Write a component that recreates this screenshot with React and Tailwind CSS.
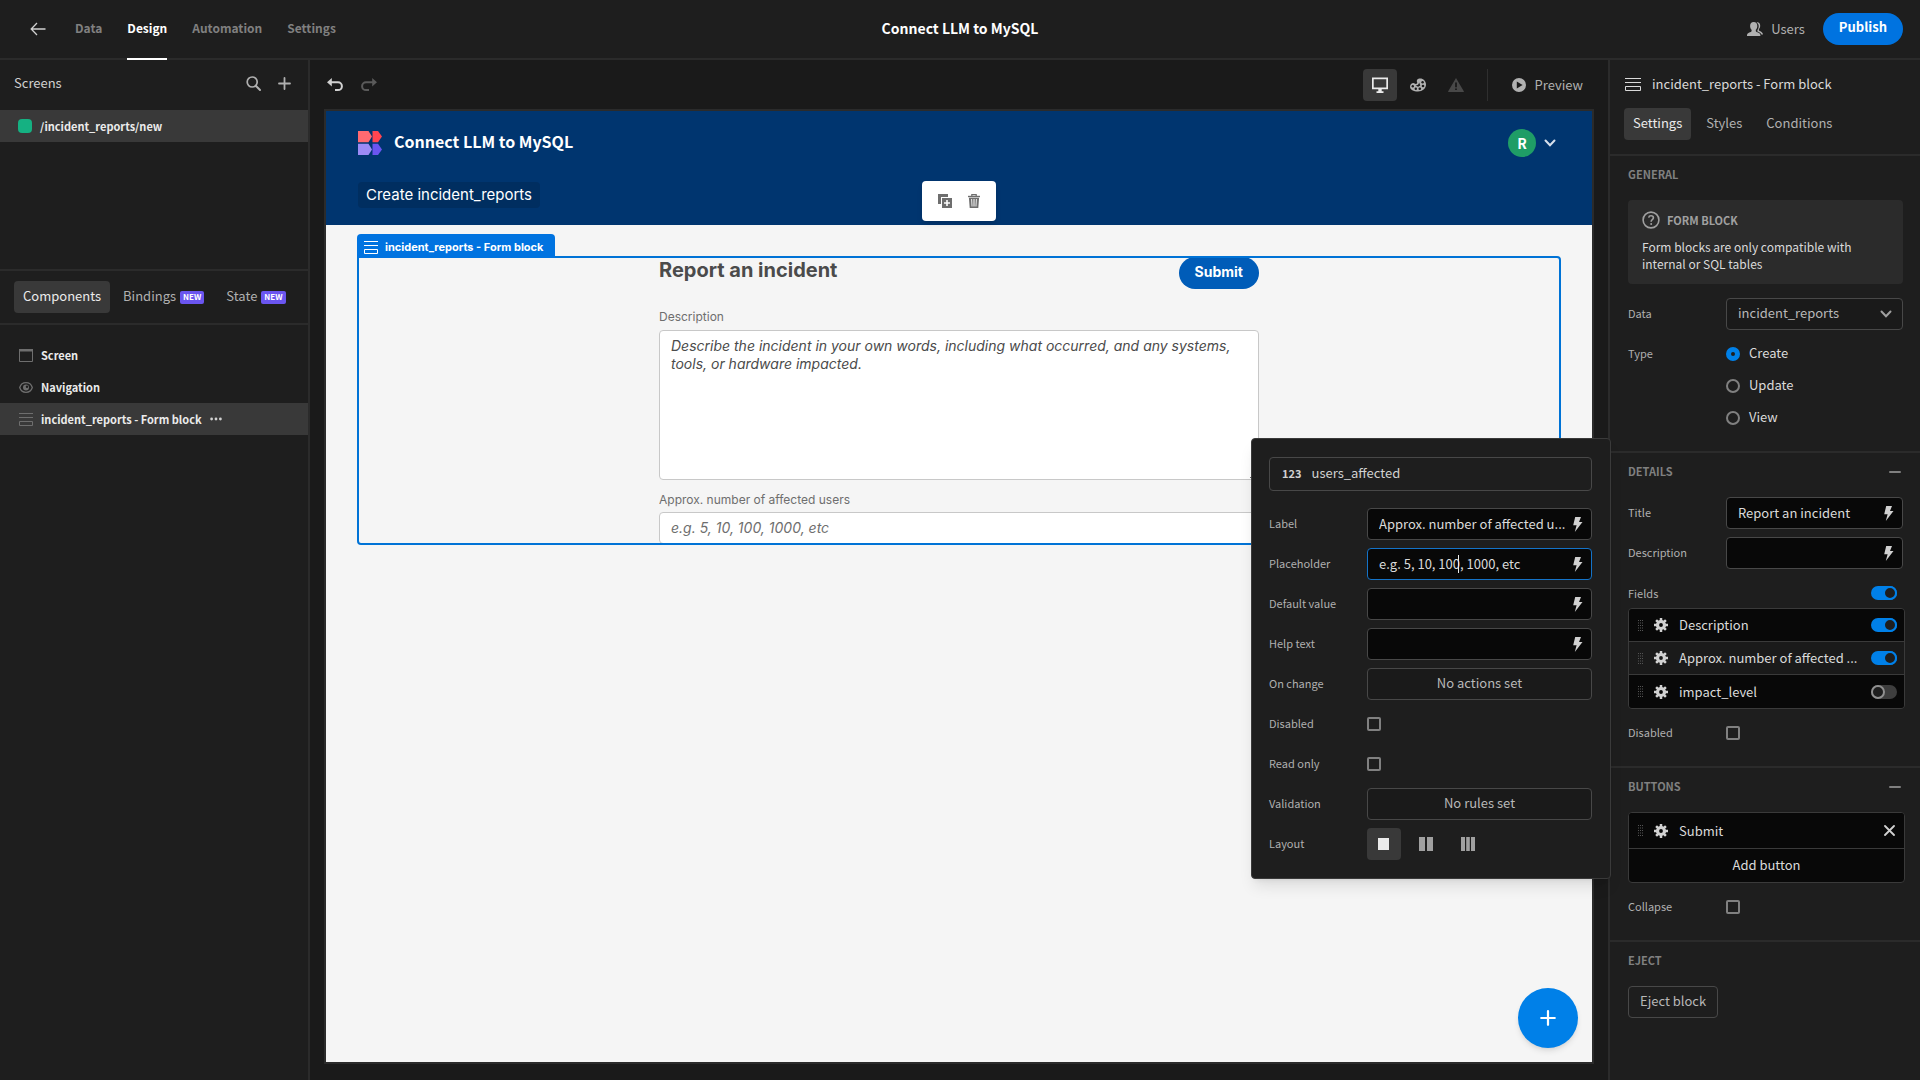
import { useState } from "react";

/* ---------- icons ---------- */

function BackIcon() {
  return (
    <svg width="16" height="14" viewBox="0 0 16 14" fill="none" stroke="currentColor" strokeWidth="1.3" aria-hidden="true">
      <path d="M15.500 7H1.500M7 1L1.200 7L7 13" />
    </svg>
  );
}

function SearchIcon() {
  return (
    <svg width="15" height="15" viewBox="0 0 15 15" fill="none" stroke="currentColor" aria-hidden="true">
      <circle cx="6.2" cy="6" r="5" strokeWidth="1.7" />
      <path d="M9.8 9.8L14 14" strokeWidth="2" strokeLinecap="round" />
    </svg>
  );
}

function PlusIcon({ size = 13 }) {
  return (
    <svg width={size} height={size} viewBox="0 0 13 13" fill="none" stroke="currentColor" strokeWidth="1.8" strokeLinecap="round" aria-hidden="true">
      <path d="M6.5 1V12M1 6.5H12" />
    </svg>
  );
}

function UndoIcon() {
  return (
    <svg width="16" height="14" viewBox="0 0 16 14" aria-hidden="true">
      <path d="M3.5 4.3H11a3.9 3.9 0 0 1 0 7.8H8" fill="none" stroke="currentColor" strokeWidth="2" />
      <path d="M0 4.3L4.8 0V8.6Z" fill="currentColor" />
    </svg>
  );
}

function RedoIcon() {
  return (
    <svg width="16" height="14" viewBox="0 0 16 14" aria-hidden="true">
      <path d="M12.5 4.3H5a3.9 3.9 0 0 0 0 7.8H8" fill="none" stroke="currentColor" strokeWidth="2" />
      <path d="M16 4.3L11.2 0V8.6Z" fill="currentColor" />
    </svg>
  );
}

function UsersIcon() {
  return (
    <svg width="16" height="14" viewBox="0 0 16 14" fill="currentColor" aria-hidden="true">
      <path d="M6.7 0C9 0 10.3 1.7 10.3 3.9c0 1.7-.7 3-1.5 3.9v1.3c0 .5.3.7.8.9 2.2.7 3.8 1.5 3.8 3.200V14H0v-.8C0 11.5 1.600 10.700 3.800 10c.5-.2.8-.4.8-.9V7.800C3.800 6.900 3.100 5.600 3.100 3.900 3.100 1.700 4.400 0 6.700 0Z" />
      <path d="M9.600.4c2.300-.3 3.600 1.100 3.600 3.300 0 1.500-.6 2.600-1.300 3.400v.9c0 .5.3.7.7.9 1.900.7 3.400 1.800 3.400 3.700h-1.600c-.5-1.600-2-2.500-4-3.200V8.200c.7-1 1.300-2.400 1.300-4.200 0-1.600-.8-2.900-2.100-3.600Z" />
    </svg>
  );
}

function DesktopIcon() {
  return (
    <svg width="16" height="16" viewBox="0 0 16 16" fill="currentColor" aria-hidden="true">
      <path fillRule="evenodd" d="M0 .5h16v11.800H9.700v1.900h1.800V16h-7v-1.800h1.800v-1.900H0ZM1.700 2.200v8.400h12.600V2.200Z" />
    </svg>
  );
}

function PaletteIcon() {
  return (
    <svg width="16" height="14" viewBox="0 0 16 14" aria-hidden="true">
      <path
        fill="currentColor"
        d="M9.200.6C12.800 0 16 2.800 16 6.600c0 4-3.600 6.900-8 6.900-4.500 0-8-1.900-8-4.800 0-2.100 1.700-3.600 3.400-3.600 1.100 0 1.400.9 2.400.9 1.300 0 1.700-.9 1.200-1.900C6.300 2.700 7.300.9 9.200.6Z"
      />
      <g fill="#1a1a1a">
        <circle cx="2.800" cy="8.300" r="1.200" />
        <circle cx="5.800" cy="10.800" r="1.200" />
        <circle cx="9.800" cy="10.800" r="1.300" />
        <circle cx="13" cy="8" r="1.300" />
        <circle cx="12.600" cy="4.200" r="1.200" />
        <path d="M5.600 7.400c2 0 3.300-1.100 3.500-3l1.200 3.200-2.200 1.200Z" />
      </g>
    </svg>
  );
}

function AlertIcon() {
  return (
    <svg width="16" height="14" viewBox="0 0 16 14" aria-hidden="true">
      <path d="M8 0L15.800 13.200a.5.5 0 0 1-.4.800H.6a.5.5 0 0 1-.4-.8Z" fill="currentColor" />
      <path d="M7.100 4.500h1.800v4.800H7.100ZM7.100 10.400h1.800v1.700H7.100Z" fill="#1a1a1a" />
    </svg>
  );
}

function PlayIcon() {
  return (
    <svg width="14" height="14" viewBox="0 0 14 14" fill="currentColor" aria-hidden="true">
      <path fillRule="evenodd" d="M7 0a7 7 0 1 1 0 14A7 7 0 0 1 7 0ZM4.800 3.600v6.800L10.600 7Z" />
    </svg>
  );
}

function FormBlockIcon({ width = 14 }) {
  return (
    <svg width={width} height="13" viewBox={width === 16 ? "0 0 16 13" : "0 0 14 13"} fill="none" stroke="currentColor" aria-hidden="true">
      {width === 16 ? <path d="M0 .5H16M0 4.500H16M.5 8.500H15.500V12.500H.5Z" /> : <path d="M0 .5H14M0 4.500H14M.5 8.500H13.500V12.500H.5Z" />}
    </svg>
  );
}

function ScreenIcon() {
  return (
    <svg width="14" height="13" viewBox="0 0 14 13" aria-hidden="true">
      <path d="M.5 1H13.500V12.500H.5Z" fill="none" stroke="currentColor" />
      <path d="M0 0H14V2.500H0Z" fill="currentColor" />
    </svg>
  );
}

function EyeIcon() {
  return (
    <svg width="14" height="11" viewBox="0 0 14 11" aria-hidden="true">
      <path d="M7 .7C10.200.7 12.500 3 13.300 5.500 12.500 8 10.200 10.300 7 10.300S1.500 8 .7 5.500C1.500 3 3.800.7 7 .7Z" fill="none" stroke="currentColor" strokeWidth="1.300" />
      <circle cx="7" cy="5.500" r="3" fill="currentColor" />
      <circle cx="8" cy="4.700" r="1.200" fill="#1e1e1e" />
    </svg>
  );
}

function MoreIcon() {
  return (
    <svg width="12" height="4" viewBox="0 0 12 4" fill="currentColor" aria-hidden="true">
      <circle cx="1.600" cy="2" r="1.400" />
      <circle cx="6" cy="2" r="1.400" />
      <circle cx="10.400" cy="2" r="1.400" />
    </svg>
  );
}

function DuplicateIcon() {
  return (
    <svg width="14" height="14" viewBox="0 0 14 14" fill="currentColor" aria-hidden="true">
      <path d="M0 0H10V3H3V10H0Z" />
      <path fillRule="evenodd" d="M4 4H14V14H4ZM8.200 6V8.200H6V9.800H8.200V12H9.800V9.800H12V8.200H9.800V6Z" />
    </svg>
  );
}

function TrashIcon() {
  return (
    <svg width="12" height="14" viewBox="0 0 12 14" fill="none" stroke="currentColor" aria-hidden="true">
      <path d="M3.800 2V.6H8.200V2" strokeWidth="1.200" />
      <path d="M0 2.500H12" strokeWidth="1.400" />
      <path fill="currentColor" fillRule="evenodd" stroke="none" d="M.9 3.800H11.100L10.300 14H1.700ZM3.200 5L3.600 12.500H4.500L4.100 5ZM5.500 5V12.500H6.500V5ZM7.900 5L7.500 12.500H8.400L8.800 5Z" />
    </svg>
  );
}

function ChevronIcon({ className }) {
  return (
    <svg width="12" height="8" viewBox="0 0 12 8" fill="none" stroke="currentColor" strokeWidth="2" strokeLinecap="round" className={className} aria-hidden="true">
      <path d="M1.500 1.500L6 6.300L10.500 1.500" />
    </svg>
  );
}

function HelpIcon() {
  return (
    <svg width="18" height="18" viewBox="0 0 18 18" fill="none" stroke="currentColor" strokeWidth="1.600" aria-hidden="true">
      <circle cx="9" cy="9" r="7.900" />
      <path d="M6.700 6.600C6.900 5.300 7.900 4.800 9 4.800c1.300 0 2.400.7 2.400 2 0 1.700-2.200 1.800-2.200 3.500V10.800" />
      <circle cx="9.200" cy="13" r="1" fill="currentColor" stroke="none" />
    </svg>
  );
}

function BoltIcon() {
  return (
    <svg width="10" height="15" viewBox="0 0 10 15" fill="currentColor" aria-hidden="true">
      <path d="M2.200 0H8L6 5H9.500L1.800 15L3.600 8.300H.2Z" />
    </svg>
  );
}

function GearIcon() {
  return (
    <svg width="14" height="14" viewBox="0 0 14 14" aria-hidden="true">
      <g stroke="currentColor" strokeWidth="2.500">
        <path d="M7 0V3M7 11V14M0 7H3M11 7H14M2.100 2.100L4.200 4.200M9.800 9.800L11.900 11.900M2.100 11.900L4.200 9.800M9.800 4.200L11.900 2.100" />
      </g>
      <circle cx="7" cy="7" r="3.500" fill="none" stroke="currentColor" strokeWidth="3.200" />
    </svg>
  );
}

function DragIcon() {
  return (
    <svg width="5" height="11" viewBox="0 0 5 11" fill="#555555" aria-hidden="true">
      {[0, 2.500, 5, 7.500, 10].map((y) => (
        <path key={y} d={`M0 ${y}h1v1H0ZM2 ${y}h1v1H2ZM4 ${y}h1v1H4Z`} />
      ))}
    </svg>
  );
}

function CloseIcon() {
  return (
    <svg width="11" height="11" viewBox="0 0 11 11" fill="none" stroke="currentColor" strokeWidth="1.800" strokeLinecap="round" aria-hidden="true">
      <path d="M1 1L10 10M10 1L1 10" />
    </svg>
  );
}

function MinusIcon() {
  return (
    <svg width="12" height="2" viewBox="0 0 12 2" fill="currentColor" aria-hidden="true">
      <rect width="12" height="2" rx="1" />
    </svg>
  );
}

function LogoIcon() {
  return (
    <svg width="24" height="24" viewBox="0 0 24 24" aria-hidden="true">
      <path d="M0 0H10.500L14 5.600L10.500 11.200H0Z" fill="#ff6a71" />
      <path d="M14.500 0H20L24 5.600L20 11.200H14.500Z" fill="#ff4550" />
      <path d="M0 12.800H10.500L14 18.400L10.500 24H0Z" fill="#9c8bf6" />
      <path d="M14.500 12.800H20L24 18.400L20 24H14.500Z" fill="#6a55f0" />
    </svg>
  );
}

function ColumnsIcon({ count }) {
  const shapes = { 1: "M1 1H12V13H1Z", 2: "M0 0H6V14H0ZM8 0H14V14H8Z", 3: "M0 0H4V14H0ZM5.200 0H8.800V14H5.200ZM10 0H14V14H10Z" };
  return (
    <svg width="14" height="14" viewBox="0 0 14 14" fill="currentColor" aria-hidden="true">
      <path d={shapes[count]} />
    </svg>
  );
}

/* ---------- shared controls ---------- */

const fieldBox = "h-8 w-full rounded border border-[#484848] pb-0.5";

function NewBadge() {
  return <span className="mt-0.5 flex h-[13px] items-center rounded-xs bg-[#6a55f0] px-[3px] text-[8px] font-bold text-white">NEW</span>;
}

function PanelTab({ active, onClick, children }) {
  return (
    <button
      type="button"
      onClick={onClick}
      className={`flex h-8 items-center gap-1 rounded px-[9px] pb-0.5 text-[13px] ${active ? "bg-[#393939] text-[#ebebeb]" : "text-[#b0b0b0]"}`}
    >
      {children}
    </button>
  );
}

function BindableInput({ id, value, focused }) {
  return (
    <div className="relative">
      <input
        id={id}
        defaultValue={value}
        className={`block h-8 w-full rounded border bg-[#080808] pr-5 pb-0.5 pl-[11px] text-[13px] text-[#dadada] outline-none ${focused ? "border-[#1473c8]" : "border-[#484848]"}`}
      />
      {focused && <span className="absolute top-[7px] left-[91px] h-[18px] w-px bg-[#ebebeb]" />}
      <button type="button" aria-label="Bind value" className="absolute inset-y-0 right-[9px] flex items-center text-[#d1d1d1]">
        <BoltIcon />
      </button>
    </div>
  );
}

function CheckBox({ id }) {
  return <input id={id} type="checkbox" className="block size-[14px] appearance-none rounded-xs border-2 border-[#808080] checked:bg-[#0080e8]" />;
}

function Toggle({ label, on }) {
  return (
    <input
      type="checkbox"
      role="switch"
      aria-label={label}
      defaultChecked={on}
      className="flex h-[14px] w-[26px] shrink-0 appearance-none rounded-full bg-[#3e3e3e] before:size-[14px] before:rounded-full before:border-2 before:border-[#909090] before:bg-[#1e1e1e] checked:justify-end checked:bg-[#0080e8] checked:before:border-[#0080e8]"
    />
  );
}

function SettingRow({ label, htmlFor, children }) {
  return (
    <div className="grid min-h-8 grid-cols-[98px_1fr] items-center">
      <label htmlFor={htmlFor} className="pb-0.5 text-[11px] leading-4 text-[#b0b0b0]">
        {label}
      </label>
      {children}
    </div>
  );
}

function Section({ title, collapsible, children, last }) {
  return (
    <section className={`pr-[17px] pb-[17px] pl-[18px] ${last ? "" : "border-b-2 border-[#2b2b2b]"}`}>
      <div className="mb-1.5 flex h-[38px] items-center justify-between">
        <h2 className="pb-0.5 text-[11px] font-bold text-[#808080] uppercase">{title}</h2>
        {collapsible && (
          <button type="button" aria-label={`Collapse ${title}`} className="mr-0.5 text-[#808080]">
            <MinusIcon />
          </button>
        )}
      </div>
      <div className="flex flex-col gap-2">{children}</div>
    </section>
  );
}

/* ---------- page parts ---------- */

function TopBar() {
  const [active, setActive] = useState("Design");
  return (
    <header className="grid h-[60px] shrink-0 grid-cols-[1fr_auto_1fr] items-stretch border-b-2 border-[#2b2b2b] bg-[#1e1e1e]">
      <nav className="flex items-stretch gap-[25px] pl-[30px] text-[12px] font-bold">
        <button type="button" aria-label="Back" className="mr-1 text-[#d1d1d1]">
          <BackIcon />
        </button>
        {["Data", "Design", "Automation", "Settings"].map((t) => (
          <a
            key={t}
            href={`#${t.toLowerCase()}`}
            onClick={() => setActive(t)}
            className={`-mb-0.5 flex items-center border-b-2 pb-0.5 ${t === active ? "border-white text-white" : "border-transparent text-[#808080]"}`}
          >
            {t}
          </a>
        ))}
      </nav>
      <h1 className="self-center pb-0.5 text-[14px] font-bold text-white">Connect LLM to MySQL</h1>
      <div className="flex items-center justify-end gap-[18px] pr-[17px]">
        <button type="button" className="flex items-center gap-2 text-[13px] text-[#b0b0b0]">
          <UsersIcon />
          Users
        </button>
        <button type="button" className="h-8 rounded-full bg-[#0073e0] px-4 pb-1 text-[13px] font-bold text-white">
          Publish
        </button>
      </div>
    </header>
  );
}

function TreeItem({ icon, label, selected }) {
  return (
    <li className={`flex h-8 items-center gap-2 pl-[19px] text-[11px] font-bold text-[#ebebeb] ${selected ? "bg-[#393939]" : ""}`}>
      <span className="flex w-[14px] text-[#6e6e6e]">{icon}</span>
      <a href="#component">{label}</a>
      {selected && (
        <button type="button" aria-label="More actions" className="text-[#d1d1d1]">
          <MoreIcon />
        </button>
      )}
    </li>
  );
}

function LeftPanel() {
  const [tab, setTab] = useState("Components");
  return (
    <aside className="flex w-[310px] shrink-0 flex-col border-r-2 border-[#2b2b2b] bg-[#1e1e1e]">
      <div className="h-[211px] border-b-2 border-[#2b2b2b]">
        <div className="flex h-[50px] items-center pr-[17px] pb-1 pl-[14px] text-[#b0b0b0]">
          <h2 className="flex-1 text-[13px] text-[#d1d1d1]">Screens</h2>
          <button type="button" aria-label="Search screens" className="mr-[17px]">
            <SearchIcon />
          </button>
          <button type="button" aria-label="Add screen">
            <PlusIcon />
          </button>
        </div>
        <a href="#screen" className="flex h-8 items-center gap-2 bg-[#393939] pl-[18px] text-[11px] font-bold text-[#ebebeb]">
          <span className="size-[14px] rounded bg-[#15b182]" />
          /incident_reports/new
        </a>
      </div>
      <div className="flex items-center gap-1 border-b-2 border-[#2b2b2b] px-[14px] py-[10px]">
        <PanelTab active={tab === "Components"} onClick={() => setTab("Components")}>
          Components
        </PanelTab>
        <PanelTab active={tab === "Bindings"} onClick={() => setTab("Bindings")}>
          Bindings
          <NewBadge />
        </PanelTab>
        <PanelTab active={tab === "State"} onClick={() => setTab("State")}>
          State
          <NewBadge />
        </PanelTab>
      </div>
      <ul className="pt-[14px]">
        <TreeItem icon={<ScreenIcon />} label="Screen" />
        <TreeItem icon={<EyeIcon />} label="Navigation" />
        <TreeItem icon={<FormBlockIcon />} label="incident_reports - Form block" selected />
      </ul>
    </aside>
  );
}

function CanvasToolbar() {
  return (
    <div className="flex h-[49px] items-center pt-px text-[#b0b0b0]">
      <button type="button" aria-label="Undo" className="ml-[3px] text-[#d1d1d1]">
        <UndoIcon />
      </button>
      <button type="button" aria-label="Redo" className="ml-[18px] text-[#5a5a5a]">
        <RedoIcon />
      </button>
      <div className="ml-auto flex items-center gap-1">
        <button type="button" aria-label="Desktop view" className="flex h-8 w-[34px] items-center justify-center rounded bg-[#393939] text-[#ebebeb]">
          <DesktopIcon />
        </button>
        <button type="button" aria-label="Theme" className="flex h-8 w-[34px] items-center justify-center">
          <PaletteIcon />
        </button>
        <button type="button" aria-label="Errors" className="flex h-8 w-[34px] items-center justify-center text-[#484848]">
          <AlertIcon />
        </button>
      </div>
      <div className="mr-6 ml-[14px] h-8 w-px bg-[#2f2f2f]" />
      <button type="button" className="mr-[11px] flex items-center gap-[9px] text-[13px]">
        <PlayIcon />
        Preview
      </button>
    </div>
  );
}

function IncidentForm() {
  return (
    <form className="mx-auto h-[285px] w-full max-w-[600px] overflow-hidden">
      <div className="flex items-start justify-between">
        <h2 className="text-[20px] leading-6 font-bold text-[#4b4b4b]">Report an incident</h2>
        <button type="button" className="-mt-px h-8 rounded-full bg-[#005cb8] px-4 pb-0.5 text-[14px] font-bold text-white">
          Submit
        </button>
      </div>
      <label htmlFor="description" className="mt-4 block h-[25px] text-[12px] leading-6 text-[#6e6e6e]">
        Description
      </label>
      <textarea
        id="description"
        placeholder="Describe the incident in your own words, including what occurred, and any systems, tools, or hardware impacted."
        className="block h-[150px] w-full rounded border border-[#c8c8c8] bg-white px-[11px] py-1.5 text-[14px] leading-[18px] placeholder:text-[#4b4b4b] placeholder:italic"
      />
      <label htmlFor="affected" className="mt-2 block h-6 text-[12px] leading-6 text-[#6e6e6e]">
        Approx. number of affected users
      </label>
      <input
        id="affected"
        placeholder="e.g. 5, 10, 100, 1000, etc"
        className="block h-8 w-full rounded border border-[#c8c8c8] bg-white px-[11px] pb-0.5 text-[14px] placeholder:text-[#6e6e6e] placeholder:italic"
      />
    </form>
  );
}

function AppPreview() {
  return (
    <div className="relative flex-1 border-2 border-[#2b2b2b] bg-[#f5f5f5] font-['Inter',sans-serif]">
      <div className="h-[114px] bg-[#00356f] px-8 pt-[18px] text-white">
        <div className="flex h-7 items-center">
          <LogoIcon />
          <span className="ml-3 pb-1 font-['Noto_Sans_CJK_KR',sans-serif] text-[16px] font-bold">Connect LLM to MySQL</span>
          <button type="button" aria-label="Account" className="ml-auto flex items-center gap-2 pr-1 text-[#d6e0ec]">
            <span className="flex size-7 items-center justify-center rounded-full bg-[#1f9d66] font-['Noto_Sans_CJK_KR',sans-serif] text-[14px] font-bold text-white">R</span>
            <ChevronIcon />
          </button>
        </div>
        <a href="#create" className="mt-[25px] inline-flex h-[26px] items-center rounded bg-[#002e60] px-2 text-[15px]">
          Create incident_reports
        </a>
      </div>
      <div className="px-[31px] pt-[31px]">
        <div className="relative rounded rounded-tl-none border-2 border-[#0073d6]">
          <div className="absolute bottom-full -left-0.5 flex h-6 items-center gap-[7px] rounded-t bg-[#0073e0] pt-0.5 pr-3 pl-[7px] text-[11px] font-bold whitespace-nowrap text-white">
            <FormBlockIcon />
            incident_reports - Form block
          </div>
          <IncidentForm />
        </div>
      </div>
      <div className="absolute top-[70px] left-1/2 flex h-10 w-[74px] -translate-x-1/2 items-center justify-center gap-4 rounded bg-white text-[#6e6e6e] shadow-md">
        <button type="button" aria-label="Duplicate">
          <DuplicateIcon />
        </button>
        <button type="button" aria-label="Delete">
          <TrashIcon />
        </button>
      </div>
      <button
        type="button"
        aria-label="Add component"
        className="absolute right-[14px] bottom-[14px] flex size-[60px] items-center justify-center rounded-full bg-[#0080e8] text-white shadow-md"
      >
        <PlusIcon size={16} />
      </button>
    </div>
  );
}

function FieldPopover() {
  return (
    <div className="absolute top-[378px] right-[309px] z-10 w-[360px] rounded border border-[#3a3a3a] bg-[#1e1e1e] py-[18px] pr-[18px] pl-[17px] shadow-lg">
      <div className="mb-[17px] flex h-[34px] items-center gap-[10px] rounded border border-[#484848] px-3 pb-0.5 text-[13px] text-[#d1d1d1]">
        <span className="text-[11px] font-bold">123</span>
        users_affected
      </div>
      <div className="flex flex-col gap-2">
        <SettingRow label="Label" htmlFor="f-label">
          <BindableInput id="f-label" value="Approx. number of affected u..." />
        </SettingRow>
        <SettingRow label="Placeholder" htmlFor="f-placeholder">
          <BindableInput id="f-placeholder" value="e.g. 5, 10, 100, 1000, etc" focused />
        </SettingRow>
        <SettingRow label="Default value" htmlFor="f-default">
          <BindableInput id="f-default" value="" />
        </SettingRow>
        <SettingRow label="Help text" htmlFor="f-help">
          <BindableInput id="f-help" value="" />
        </SettingRow>
        <SettingRow label="On change" htmlFor="f-change">
          <button id="f-change" type="button" className={`${fieldBox} bg-[#1a1a1a] text-[13px] text-[#b8b8b8]`}>
            No actions set
          </button>
        </SettingRow>
        <SettingRow label="Disabled" htmlFor="f-disabled">
          <CheckBox id="f-disabled" />
        </SettingRow>
        <SettingRow label="Read only" htmlFor="f-readonly">
          <CheckBox id="f-readonly" />
        </SettingRow>
        <SettingRow label="Validation" htmlFor="f-validation">
          <button id="f-validation" type="button" className={`${fieldBox} bg-[#1a1a1a] text-[13px] text-[#b8b8b8]`}>
            No rules set
          </button>
        </SettingRow>
        <SettingRow label="Layout" htmlFor="f-layout">
          <div className="flex gap-2">
            {[1, 2, 3].map((n) => (
              <button
                key={n}
                id={n === 1 ? "f-layout" : undefined}
                type="button"
                aria-label={`${n} column layout`}
                className={`flex h-8 w-[34px] items-center justify-center rounded ${n === 1 ? "bg-[#393939] text-[#ebebeb]" : "text-[#a0a0a0]"}`}
              >
                <ColumnsIcon count={n} />
              </button>
            ))}
          </div>
        </SettingRow>
      </div>
    </div>
  );
}

function ListRow({ label, selected, children }) {
  return (
    <li className={`flex h-full items-center pr-[7px] pl-[9px] text-[13px] text-[#dadada] ${selected ? "bg-[#1a1a1a]" : "bg-[#080808]"}`}>
      <DragIcon />
      <button type="button" aria-label={`Edit ${label}`} className="mr-[11px] ml-[11px] text-[#d1d1d1]">
        <GearIcon />
      </button>
      <span className="min-w-0 flex-1 whitespace-nowrap">{label}</span>
      {children}
    </li>
  );
}

function RightPanel() {
  const [tab, setTab] = useState("Settings");
  const fields = [
    { label: "Description", on: true },
    { label: "Approx. number of affected ...", on: true, selected: true },
    { label: "impact_level", on: false },
  ];
  return (
    <aside className="relative w-[312px] shrink-0 border-l-2 border-[#2b2b2b] bg-[#1e1e1e]">
      <div className="border-b-2 border-[#2b2b2b] px-[14px] pt-3 pb-[14px]">
        <div className="mb-3 flex h-6 items-center gap-[11px] pl-px text-[13px] text-[#dadada]">
          <FormBlockIcon width={16} />
          incident_reports - Form block
        </div>
        <div className="flex gap-1.5">
          {["Settings", "Styles", "Conditions"].map((t) => (
            <PanelTab key={t} active={t === tab} onClick={() => setTab(t)}>
              {t}
            </PanelTab>
          ))}
        </div>
      </div>

      <Section title="General">
        <div className="mb-1.5 h-[84px] rounded bg-[#2b2b2b] px-[14px] pt-[10px]">
          <div className="flex items-center gap-[7px] text-[11px] leading-5 font-bold text-[#a0a0a0]">
            <HelpIcon />
            FORM BLOCK
          </div>
          <p className="mt-2 text-[12px] leading-[17px] text-[#dadada]">Form blocks are only compatible with internal or SQL tables</p>
        </div>
        <SettingRow label="Data" htmlFor="s-data">
          <div className="relative">
            <select id="s-data" className={`${fieldBox} block appearance-none bg-[#1a1a1a] px-[11px] text-[13px] text-[#b8b8b8]`}>
              <option>incident_reports</option>
            </select>
            <ChevronIcon className="pointer-events-none absolute top-3 right-[11px] text-[#a0a0a0]" />
          </div>
        </SettingRow>
        <fieldset className="grid grid-cols-[98px_1fr]">
          <legend className="float-left h-8 text-[11px] leading-[30px] text-[#b0b0b0]">Type</legend>
          <div className="col-start-2">
            {["Create", "Update", "View"].map((t) => (
              <label key={t} className="flex h-8 items-center gap-[9px] text-[13px] text-[#dadada]">
                <input
                  type="radio"
                  name="type"
                  defaultChecked={t === "Create"}
                  className="size-[14px] appearance-none rounded-full border-2 border-[#808080] checked:border-[5px] checked:border-[#0080e8]"
                />
                <span className="pb-0.5">{t}</span>
              </label>
            ))}
          </div>
        </fieldset>
      </Section>

      <Section title="Details" collapsible>
        <SettingRow label="Title" htmlFor="s-title">
          <BindableInput id="s-title" value="Report an incident" />
        </SettingRow>
        <SettingRow label="Description" htmlFor="s-description">
          <BindableInput id="s-description" value="" />
        </SettingRow>
        <div>
          <div className="flex h-[31px] items-center justify-between pr-1.5">
            <span className="text-[11px] text-[#b0b0b0]">Fields</span>
            <Toggle label="All fields" on />
          </div>
          <ul className="-mr-0.5 grid auto-rows-[33px] grid-cols-1 divide-y divide-[#3a3a3a] overflow-hidden rounded border border-[#3a3a3a]">
            {fields.map((f) => (
              <ListRow key={f.label} label={f.label} selected={f.selected}>
                <Toggle label={f.label} on={f.on} />
              </ListRow>
            ))}
          </ul>
        </div>
        <SettingRow label="Disabled" htmlFor="s-disabled">
          <CheckBox id="s-disabled" />
        </SettingRow>
      </Section>

      <Section title="Buttons" collapsible>
        <div className="-mr-0.5 divide-y divide-[#3a3a3a] overflow-hidden rounded border border-[#3a3a3a] bg-[#080808]">
          <ul className="h-9">
            <ListRow label="Submit">
              <button type="button" aria-label="Remove Submit" className="mr-0.5 text-[#d1d1d1]">
                <CloseIcon />
              </button>
            </ListRow>
          </ul>
          <button type="button" className="h-[33px] w-full pb-0.5 text-[13px] text-[#dadada]">
            Add button
          </button>
        </div>
        <SettingRow label="Collapse" htmlFor="s-collapse">
          <CheckBox id="s-collapse" />
        </SettingRow>
      </Section>

      <Section title="Eject" last>
        <button type="button" className="h-8 self-start rounded border border-[#484848] px-[11px] pb-0.5 text-[13px] text-[#b8b8b8]">
          Eject block
        </button>
      </Section>

      <FieldPopover />
    </aside>
  );
}

export default function App() {
  return (
    <div className="flex min-h-screen flex-col bg-[#1a1a1a] font-['Noto_Sans_CJK_KR',sans-serif] leading-5">
      <TopBar />
      <div className="flex flex-1">
        <LeftPanel />
        <main className="flex min-w-0 flex-1 flex-col px-[14px] pb-4">
          <CanvasToolbar />
          <AppPreview />
        </main>
        <RightPanel />
      </div>
    </div>
  );
}
